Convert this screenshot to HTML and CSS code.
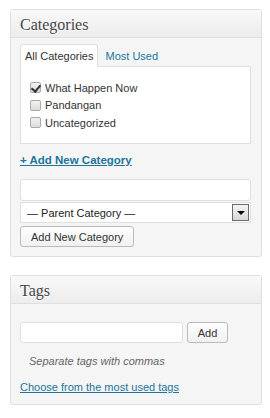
FILE: index.html
```html
<!DOCTYPE html>
<html lang="en">
  <head>
    <meta name="viewport" content="width=device-width, initial-scale=1.0" />
    <title>Post boxes</title>
    <link rel="stylesheet" href="styles.css">
  </head>
  <body>
    <div class="postbox">
      <h3 class="hndle">Categories</h3>
      <div class="inside">
        <ul class="tabs">
          <li class="tab active">All Categories</li>
          <li class="tab"><a href="#">Most Used</a></li>
        </ul>
        <div class="tab-panel">
          <label class="item"><span class="check checked"></span>What Happen Now</label>
          <label class="item"><span class="check"></span>Pandangan</label>
          <label class="item"><span class="check"></span>Uncategorized</label>
        </div>
        <a href="#" class="add-toggle">+ Add New Category</a>
        <input type="text" class="field" />
        <div class="select-wrap">
          <select class="field select">
            <option>&mdash; Parent Category &mdash;</option>
          </select>
          <span class="select-arrow"></span>
        </div>
        <button class="btn">Add New Category</button>
      </div>
    </div>

    <div class="postbox">
      <h3 class="hndle">Tags</h3>
      <div class="inside">
        <div class="tag-row">
          <input type="text" class="field tag-input" />
          <button class="btn">Add</button>
        </div>
        <p class="howto">Separate tags with commas</p>
        <a href="#" class="cloud-link">Choose from the most used tags</a>
      </div>
    </div>
  </body>
</html>
```
FILE: styles.css
```css
* {
  padding: 0;
  margin: 0;
  box-sizing: border-box;
}
body {
  background-color: #ffffff;
  padding: 9px 9px 0 10px;
  font-family: "Liberation Sans", Arial, sans-serif;
  font-size: 11px;
  color: #333333;
}
.postbox {
  width: 252px;
  background-color: #f5f5f5;
  border: 1px solid #dfdfdf;
  border-radius: 3px;
  margin-bottom: 18px;
  box-shadow: inset 0 1px 0 #ffffff;
}
.hndle {
  height: 28px;
  padding: 3px 9px 0;
  font-family: "Liberation Serif", "Times New Roman", serif;
  font-size: 16px;
  font-weight: 400;
  line-height: 24px;
  color: #464646;
  background: linear-gradient(to bottom, #f9f9f9, #ececec);
  border-bottom: 1px solid #dfdfdf;
  text-shadow: 0 1px 0 #ffffff;
}
.inside {
  padding: 6px 10px 9px 9px;
}
.tabs {
  list-style: none;
  display: flex;
  height: 23px;
  margin-bottom: -1px;
  position: relative;
}
.tab {
  padding: 5px 4px 0 5px;
  line-height: 14px;
}
.tab.active {
  background-color: #ffffff;
  border: 1px solid #dfdfdf;
  border-bottom-color: #ffffff;
  border-radius: 3px 3px 0 0;
  padding: 4px 4px 0 4px;
}
.tab a {
  color: #21759b;
  text-decoration: none;
  padding-left: 2px;
}
.tab-panel {
  background-color: #ffffff;
  border: 1px solid #dfdfdf;
  height: 78px;
  padding: 13px 0 0 9px;
  display: flex;
  flex-direction: column;
  gap: 2.5px;
}
.item {
  display: flex;
  align-items: center;
  height: 15px;
  gap: 4px;
}
.check {
  width: 11px;
  height: 11px;
  border: 1px solid #a9a9a9;
  border-radius: 2px;
  background: linear-gradient(to bottom, #f2f2f2, #dcdcdc);
  position: relative;
  display: inline-block;
}
.check.checked::after {
  content: "";
  position: absolute;
  left: 2px;
  top: 0;
  width: 4px;
  height: 7px;
  border: solid #333333;
  border-width: 0 2px 2px 0;
  transform: rotate(40deg);
}
.add-toggle {
  display: block;
  margin: 8px 0 11px 0;
  font-weight: 700;
  font-size: 11.5px;
  color: #21759b;
  line-height: 16px;
}
.field {
  display: block;
  width: 231px;
  height: 22px;
  border: 1px solid #dfdfdf;
  border-radius: 3px;
  background-color: #ffffff;
  font-family: "Liberation Sans", Arial, sans-serif;
  font-size: 11px;
  color: #333333;
  outline: none;
}
.select-wrap {
  position: relative;
  margin-top: 1px;
}
.select {
  appearance: none;
  -webkit-appearance: none;
  height: 21px;
  border-radius: 0;
  padding-left: 6px;
  color: #222222;
}
.select-arrow {
  position: absolute;
  top: 2px;
  right: 2px;
  width: 17px;
  height: 17px;
  border: 1px solid #6a6a6a;
  background: linear-gradient(to bottom, #f4f4f4, #d8d8d8);
}
.select-arrow::after {
  content: "";
  position: absolute;
  left: 4px;
  top: 6px;
  border-left: 4px solid transparent;
  border-right: 4px solid transparent;
  border-top: 4px solid #000000;
}
.btn {
  display: block;
  height: 21px;
  margin-top: 3px;
  padding: 0 10px;
  font-family: "Liberation Sans", Arial, sans-serif;
  font-size: 11px;
  color: #333333;
  border: 1px solid #bbbbbb;
  border-radius: 3px;
  background: linear-gradient(to bottom, #fefefe, #f0f0f0);
}
.tag-row {
  display: flex;
  gap: 4px;
  margin-top: 12px;
}
.tag-input {
  width: 163px;
  height: 21px;
}
.tag-row .btn {
  margin-top: 0;
  width: 41px;
  padding: 0;
}
.howto {
  font-style: italic;
  color: #666666;
  font-size: 11px;
  margin: 11px 0 0 9px;
  line-height: 14px;
}
.cloud-link {
  display: block;
  color: #21759b;
  font-size: 11px;
  margin-top: 11px;
  line-height: 16px;
}
```
